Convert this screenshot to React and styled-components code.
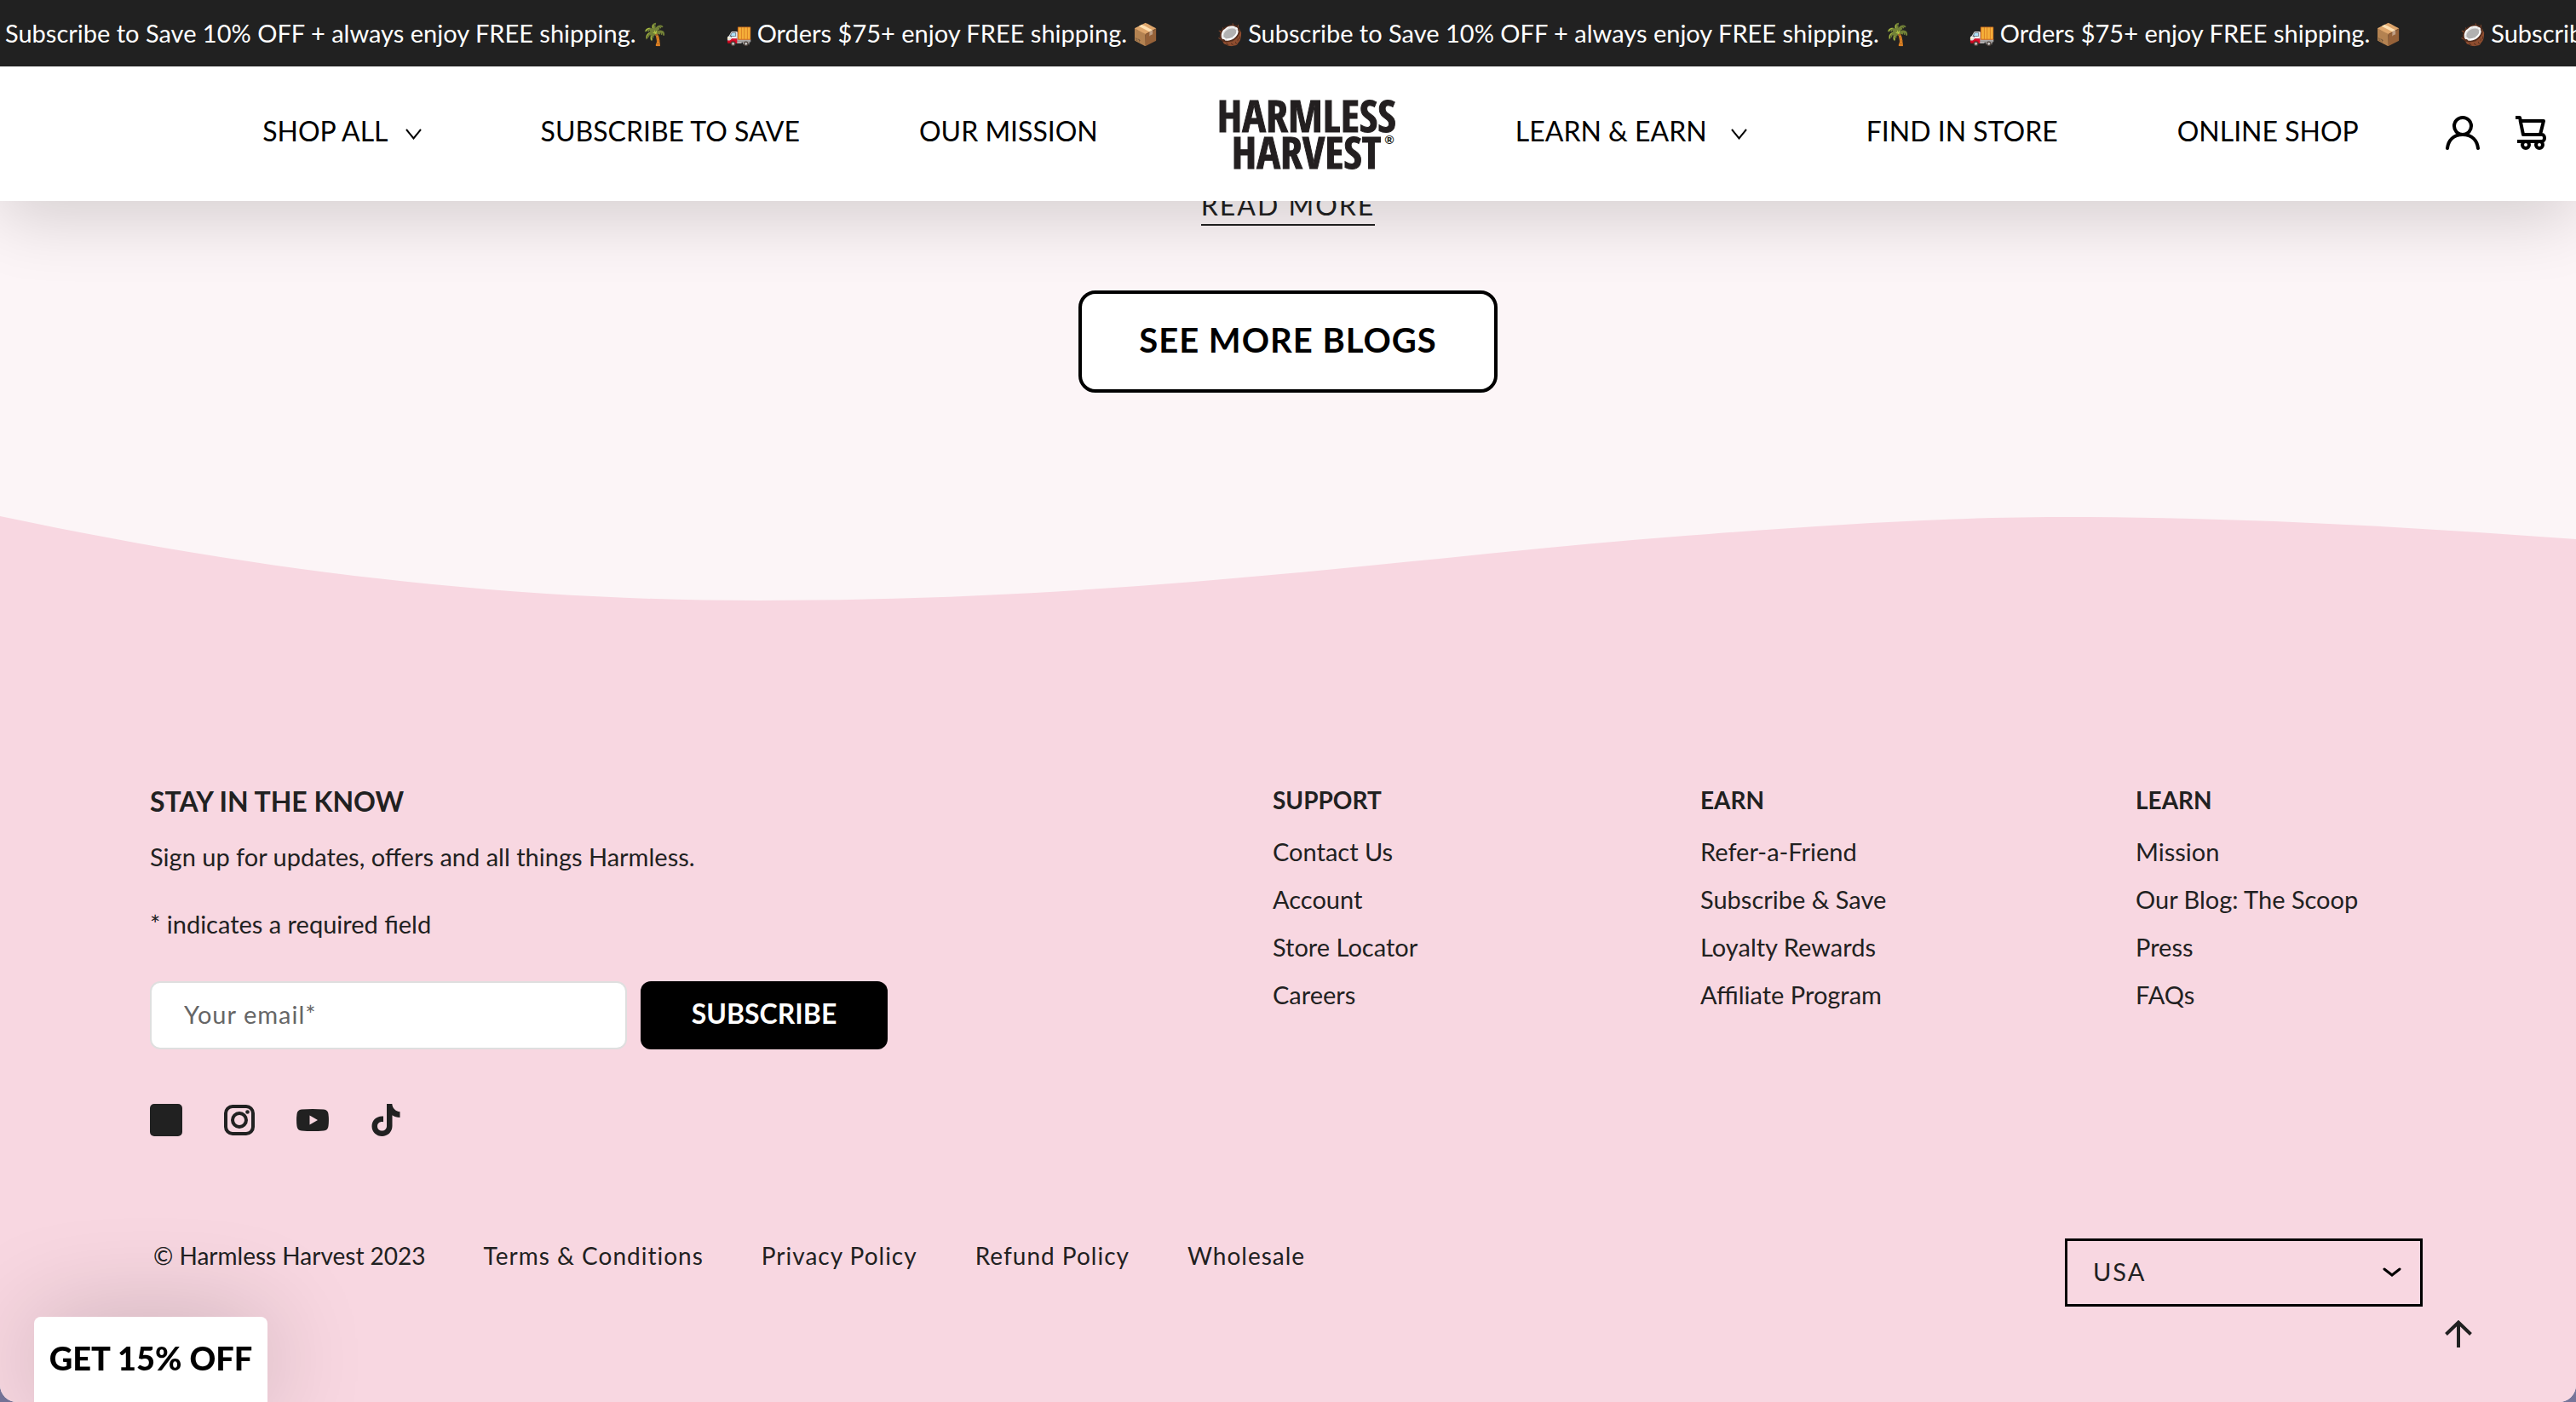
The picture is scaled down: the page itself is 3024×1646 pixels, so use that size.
import React from "react";
import styled, { createGlobalStyle } from "styled-components";

const Global = createGlobalStyle`
  *, *::before, *::after { box-sizing: border-box; }
  body {
    margin: 0;
    background: #77759a;
    color: #212121;
    font-family: Lato, "Noto Sans", sans-serif;
    font-size: 29px;
    line-height: 36px;
  }
  a { color: inherit; text-decoration: none; }
  button, input, select { font: inherit; color: inherit; }
  h2, p, ul { margin: 0; padding: 0; }
  ul { list-style: none; }
  svg { display: block; }
`;

const Page = styled.div`
  min-height: 100vh;
  display: flex;
  flex-direction: column;
  overflow: hidden;
  border-radius: 0 0 20px 20px;
  background: #fcf5f7;
`;

/* Header */
const Header = styled.header`
  position: fixed;
  top: 0;
  left: 0;
  right: 0;
  z-index: 2;
  box-shadow: 0 20px 80px rgba(0, 0, 0, 0.16);
`;

const Announcement = styled.div`
  display: flex;
  justify-content: flex-start;
  align-items: center;
  height: 78px;
  overflow: hidden;
  background: #212121;
  color: #fff;
`;

const Track = styled.div`
  display: flex;
  gap: 68px;
  padding-left: 6px;
  white-space: nowrap;
`;

const Message = styled.span`
  display: flex;
  align-items: center;
  gap: 6px;
`;

const Emoji = styled.span`
  font-size: 25px;
`;

const NavBar = styled.div`
  display: flex;
  align-items: center;
  height: 158px;
  padding: 0 34px 2px 206px;
  background: #fff;
  color: #000;
`;

const Nav = styled.nav`
  flex: 1;
  display: flex;
  justify-content: center;
  align-items: center;
  gap: 140px;
  font-size: 32px;
  line-height: 40px;
  white-space: nowrap;
`;

const NavLink = styled.a`
  display: flex;
  align-items: center;
  gap: ${(p) => p.$gap || 20}px;
  padding-bottom: 4px;
  & > svg { margin-top: 6px; }
`;

const Logo = styled.a`
  display: flex;
  flex-direction: column;
  align-items: flex-end;
  color: #231f20;
  font-family: "Open Sans Condensed", "Roboto Condensed", "Open Sans", sans-serif;
  font-size: 52px;
  font-weight: 700;
  line-height: 43px;
  -webkit-text-stroke: 1px #231f20;
`;

const LogoLine = styled.span`
  display: flex;
  align-items: flex-start;
`;

const Mark = styled.sup`
  padding: 0 2px 0 4px;
  font-family: Lato, sans-serif;
  font-size: 14px;
  line-height: 16px;
  -webkit-text-stroke: 0;
`;

const Tools = styled.div`
  display: flex;
  gap: 41px;
`;

const IconButton = styled.button`
  display: block;
  padding: 0;
  border: 0;
  background: none;
  cursor: pointer;
`;

/* Blog section */
const Main = styled.main`
  flex: 1;
  display: flex;
  flex-direction: column;
  align-items: center;
  padding: 222px 40px 145px;
`;

const ReadMore = styled.a`
  padding-bottom: 3px;
  border-bottom: 2px solid #212121;
  font-size: 32px;
  line-height: 38px;
  letter-spacing: 2px;
`;

const OutlineButton = styled.a`
  margin-top: 76px;
  padding: 30px 67px 34px;
  border: 4px solid #000;
  border-radius: 20px;
  background: #fff;
  color: #000;
  font-size: 40px;
  font-weight: 700;
  line-height: 48px;
  letter-spacing: 1px;
`;

/* Footer */
const Wave = styled.svg`
  width: 100%;
  height: 100px;
`;

const Footer = styled.footer`
  padding: 216px 176px 112px;
  background: #f8d7e1;
`;

const FooterGrid = styled.div`
  display: grid;
  grid-template-columns: 1318fr 502fr 511fr 341fr;
`;

const Heading = styled.h2`
  font-size: ${(p) => (p.$large ? 32 : 28)}px;
  line-height: ${(p) => (p.$large ? 38 : 34)}px;
  font-weight: 700;
`;

const Text = styled.p`
  margin-top: ${(p) => p.$gap}px;
`;

const Form = styled.form`
  display: flex;
  gap: 16px;
  margin-top: 49px;
`;

const Email = styled.input`
  width: 560px;
  height: 80px;
  padding: 0 38px 4px;
  border: 2px solid #dfdfdf;
  border-radius: 12px;
  background: #fff;
  letter-spacing: 1px;
  &::placeholder { color: #666; opacity: 1; }
`;

const Subscribe = styled.button`
  width: 290px;
  height: 80px;
  padding: 0 0 4px;
  border: 0;
  border-radius: 12px;
  background: #000;
  color: #fff;
  font-size: 32px;
  font-weight: 700;
`;

const Socials = styled.div`
  display: flex;
  gap: 48px;
  margin-top: 64px;
`;

const LinkList = styled.ul`
  margin-top: 16px;
  line-height: 56px;
`;

const BottomRow = styled.div`
  display: flex;
  justify-content: space-between;
  align-items: flex-start;
  margin-top: 120px;
  padding: 0 4px;
`;

const Legal = styled.div`
  display: flex;
  gap: 68px;
  font-size: 28px;
  line-height: 40px;
`;

const LegalLink = styled.a`
  letter-spacing: 1px;
`;

const SelectBox = styled.label`
  display: grid;
  align-items: center;
  width: 420px;
  height: 80px;
  border: 3px solid #000;
  & > * { grid-area: 1 / 1; }
  & > svg { justify-self: end; margin-right: 22px; pointer-events: none; }
`;

const Select = styled.select`
  width: 100%;
  height: 100%;
  padding: 0 30px 2px;
  border: 0;
  appearance: none;
  background: none;
  letter-spacing: 2px;
`;

const Promo = styled.button`
  position: fixed;
  left: 40px;
  bottom: 0;
  z-index: 3;
  width: 274px;
  height: 100px;
  padding: 0 0 4px;
  border: 0;
  border-radius: 8px 8px 0 0;
  background: #fff;
  box-shadow: 0 0 120px rgba(0, 0, 0, 0.2);
  color: #000;
  font-size: 38px;
  font-weight: 900;
`;

const ToTop = styled(IconButton)`
  position: fixed;
  right: 122px;
  bottom: 64px;
  z-index: 3;
`;

const Caret = () => (
  <svg width="19" height="13" viewBox="0 0 19 13" fill="none" stroke="#000" strokeWidth="2" aria-hidden="true">
    <path d="M1 1l8.500 10.500L18 1" />
  </svg>
);

const UserIcon = () => (
  <svg width="40" height="40" viewBox="0 0 40 40" fill="none" stroke="#000" strokeWidth="4" strokeLinecap="round">
    <circle cx="20" cy="12" r="10" />
    <path d="M2 38C3 29 9 22 20 22S37 29 38 38" />
  </svg>
);

const CartIcon = () => (
  <svg width="38" height="40" viewBox="0 0 38 40" fill="none" stroke="#000" strokeWidth="4">
    <path d="M1 2h5l1 4h27l-4 16H10L6.500 5M30 22h2c4 0 4 8 0 8H3" strokeLinejoin="round" />
    <circle cx="13" cy="34" r="4" />
    <circle cx="29" cy="34" r="4" />
  </svg>
);

const Instagram = () => (
  <svg width="38" height="38" viewBox="0 0 38 38" fill="none" stroke="#212121" strokeWidth="4">
    <rect x="3" y="3" width="32" height="32" rx="8" />
    <circle cx="19" cy="19" r="8" />
    <circle cx="28.500" cy="9.500" r="2.300" fill="#212121" stroke="none" />
  </svg>
);

const YouTube = () => (
  <svg width="38" height="38" viewBox="0 0 38 38">
    <path
      fill="#212121"
      fillRule="evenodd"
      d="M6 6.500Q19 5.500 32 6.500Q37 7 37.500 12Q38.400 19 37.500 26Q37 31 32 31.500Q19 32.500 6 31.500Q1 31 .5 26Q-.4 19 .5 12Q1 7 6 6.500ZM15.500 13.500v11l9.500-5.500Z"
    />
  </svg>
);

const TikTok = () => (
  <svg width="38" height="38" viewBox="-2 0 38 38">
    <path
      fill="#212121"
      d="M18 0h6.300c.3 5 4 8.800 9.200 9.300V16c-3.500 0-6.500-1-9-2.800V26c0 7-5.500 12-12 12S.5 33 .5 26.200C.5 19 6.500 13.700 14 14.500v6.700c-4-.9-7 1.500-7 5s2.500 5.400 5.500 5.400 5.500-2.300 5.500-5.600Z"
    />
  </svg>
);

const messages = [
  ["🥥", "Subscribe to Save 10% OFF + always enjoy FREE shipping.", "🌴"],
  ["🚚", "Orders $75+ enjoy FREE shipping.", "📦"],
];
const ticker = [["", messages[0][1], "🌴"], messages[1], messages[0], messages[1], messages[0]];

const columns = [
  ["SUPPORT", ["Contact Us", "Account", "Store Locator", "Careers"]],
  ["EARN", ["Refer-a-Friend", "Subscribe & Save", "Loyalty Rewards", "Affiliate Program"]],
  ["LEARN", ["Mission", "Our Blog: The Scoop", "Press", "FAQs"]],
];

export default function App() {
  return (
    <Page>
      <Global />
      <Header>
        <Announcement>
          <Track>
            {ticker.map(([before, text, after], i) => (
              <Message key={i}>
                {before && <Emoji>{before}</Emoji>}
                <span>{text}</span>
                <Emoji>{after}</Emoji>
              </Message>
            ))}
          </Track>
        </Announcement>
        <NavBar>
          <Nav>
            <NavLink href="#">SHOP ALL <Caret /></NavLink>
            <NavLink href="#">SUBSCRIBE TO SAVE</NavLink>
            <NavLink href="#">OUR MISSION</NavLink>
            <Logo href="#">
              <LogoLine>HARMLESS</LogoLine>
              <LogoLine>HARVEST<Mark>®</Mark></LogoLine>
            </Logo>
            <NavLink href="#" $gap={28}>LEARN &amp; EARN <Caret /></NavLink>
            <NavLink href="#">FIND IN STORE</NavLink>
            <NavLink href="#">ONLINE SHOP</NavLink>
          </Nav>
          <Tools>
            <IconButton aria-label="Account"><UserIcon /></IconButton>
            <IconButton aria-label="Cart"><CartIcon /></IconButton>
          </Tools>
        </NavBar>
      </Header>

      <Main>
        <ReadMore href="#">READ MORE</ReadMore>
        <OutlineButton href="#">SEE MORE BLOGS</OutlineButton>
      </Main>

      <Wave viewBox="0 0 3024 100" preserveAspectRatio="none" aria-hidden="true">
        <path
          fill="#f8d7e1"
          d="M0 0C330 70 620 99 890 99C1350 99 1700 42 2006 21C2160 9 2300 1 2420 1C2640 1 2830 13 3024 27V100H0Z"
        />
      </Wave>
      <Footer>
        <FooterGrid>
          <section>
            <Heading $large>STAY IN THE KNOW</Heading>
            <Text $gap={28}>Sign up for updates, offers and all things Harmless.</Text>
            <Text $gap={43}>* indicates a required field</Text>
            <Form>
              <Email type="email" aria-label="Your email" placeholder="Your email*" />
              <Subscribe type="button">SUBSCRIBE</Subscribe>
            </Form>
            <Socials>
              <a href="#" aria-label="Facebook">
                <svg width="38" height="38" viewBox="0 0 38 38"><rect width="38" height="38" rx="5" fill="#212121" /></svg>
              </a>
              <a href="#" aria-label="Instagram"><Instagram /></a>
              <a href="#" aria-label="YouTube"><YouTube /></a>
              <a href="#" aria-label="TikTok"><TikTok /></a>
            </Socials>
          </section>
          {columns.map(([title, links]) => (
            <section key={title}>
              <Heading>{title}</Heading>
              <LinkList>
                {links.map((l) => (
                  <li key={l}><a href="#">{l}</a></li>
                ))}
              </LinkList>
            </section>
          ))}
        </FooterGrid>
        <BottomRow>
          <Legal>
            <span>© Harmless Harvest 2023</span>
            <LegalLink href="#">Terms &amp; Conditions</LegalLink>
            <LegalLink href="#">Privacy Policy</LegalLink>
            <LegalLink href="#">Refund Policy</LegalLink>
            <LegalLink href="#">Wholesale</LegalLink>
          </Legal>
          <SelectBox>
            <Select aria-label="Country" defaultValue="USA">
              <option>USA</option>
            </Select>
            <svg width="22" height="12" viewBox="0 0 22 12" fill="none" stroke="#000" strokeWidth="3" strokeLinecap="round">
              <path d="M2 2l9 7 9-7" />
            </svg>
          </SelectBox>
        </BottomRow>
      </Footer>

      <Promo>GET 15% OFF</Promo>
      <ToTop aria-label="Back to top">
        <svg width="32" height="32" viewBox="0 0 32 32" fill="none" stroke="#212121" strokeWidth="4">
          <path d="M16 32V3M1.500 16.500L16 2.500l14.500 14" />
        </svg>
      </ToTop>
    </Page>
  );
}
